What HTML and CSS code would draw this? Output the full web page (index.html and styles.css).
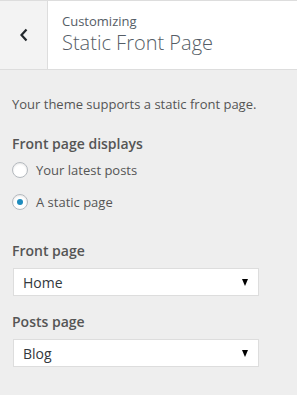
FILE: index.html
```html
<!DOCTYPE html>
<html>
<head>
<meta charset="utf-8">
<link rel="stylesheet" href="styles.css">
</head>
<body>
<div class="header">
  <div class="back">
    <svg width="10" height="14" viewBox="0 0 10 14"><path d="M7.5 1.5 L2.5 7 L7.5 12.5" fill="none" stroke="#23282d" stroke-width="2.2"/></svg>
  </div>
  <div class="title">
    <div class="small">Customizing</div>
    <div class="big">Static Front Page</div>
  </div>
</div>
<div class="content">
  <p class="desc">Your theme supports a static front page.</p>
  <div class="label">Front page displays</div>
  <div class="radio-row"><span class="radio"></span><span>Your latest posts</span></div>
  <div class="radio-row"><span class="radio checked"></span><span>A static page</span></div>
  <div class="label field-label first">Front page</div>
  <div class="select"><span>Home</span><span class="arrow"></span></div>
  <div class="label field-label">Posts page</div>
  <div class="select"><span>Blog</span><span class="arrow"></span></div>
</div>
</body>
</html>
```
FILE: styles.css
```css
html, body { margin: 0; padding: 0; }
body {
  background: #eeeeee;
  font-family: "Open Sans", sans-serif;
  color: #555d66;
  width: 297px;
  height: 395px;
  overflow: hidden;
}
.header {
  display: flex;
  height: 68px;
  background: #fff;
  border-top: 1px solid #dddddd;
  border-bottom: 1px solid #dddddd;
}
.back {
  width: 47px;
  background: #f3f3f3;
  border-right: 1px solid #dddddd;
  display: flex;
  align-items: center;
  justify-content: center;
}
.title {
  padding-left: 14px;
  padding-top: 11px;
}
.small {
  font-size: 13px;
  line-height: 18px;
  color: #555d66;
}
.big {
  font-size: 20px;
  font-weight: 300;
  line-height: 26px;
  color: #555d66;
}
.content {
  padding: 0 12px;
}
.desc {
  margin: 24px 0 0;
  font-size: 13px;
  line-height: 20px;
  color: #555;
}
.label {
  font-size: 14px;
  font-weight: 600;
  line-height: 20px;
  color: #555;
  margin-top: 20px;
}
.radio-row {
  display: flex;
  align-items: center;
  font-size: 13px;
  color: #555;
  height: 16px;
  margin-top: 8px;
}
.radio-row + .radio-row { margin-top: 16px; }
.radio {
  box-sizing: border-box;
  width: 16px;
  height: 16px;
  border: 1px solid #b4b9be;
  border-radius: 50%;
  background: #fff;
  margin-right: 8px;
  box-shadow: inset 0 1px 2px rgba(0,0,0,0.1);
  display: flex;
  align-items: center;
  justify-content: center;
}
.radio.checked::after {
  content: "";
  width: 6px;
  height: 6px;
  border-radius: 50%;
  background: #1e8cbe;
}
.field-label.first { margin-top: 31px; }
.field-label { margin-top: 16px; }
.select {
  box-sizing: border-box;
  width: 246px;
  height: 28px;
  margin-left: 1px;
  margin-top: 7px;
  background: #fff;
  border: 1px solid #dddddd;
  display: flex;
  align-items: center;
  justify-content: space-between;
  padding: 0 10px 0 9px;
  font-size: 14px;
  color: #32373c;
}
.arrow {
  width: 0;
  height: 0;
  border-left: 3.5px solid transparent;
  border-right: 3.5px solid transparent;
  border-top: 7px solid #000;
}
```
